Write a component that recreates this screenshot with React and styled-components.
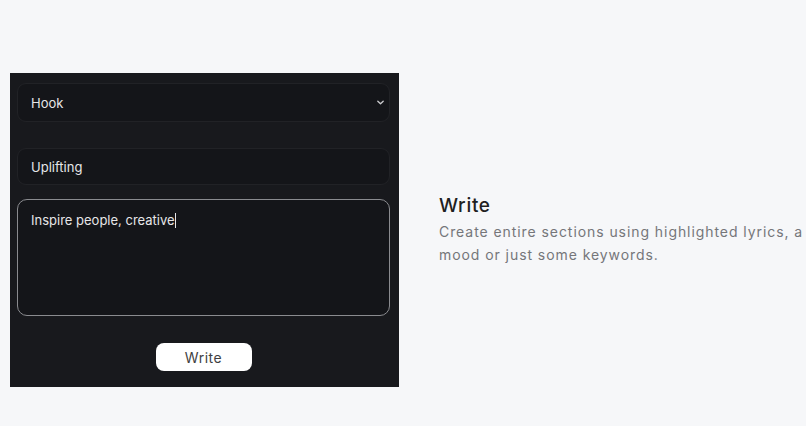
import styled, { createGlobalStyle } from 'styled-components';

const Global = createGlobalStyle`
html, body {
  margin: 0;
  background: #f6f7f9;
}
body {
  font-family: "Inter", "Liberation Sans", sans-serif;
}
`;

const Page = styled.div`
width: 806px;
height: 426px;
display: flex;
align-items: flex-start;
padding: 73px 0 0 10px;
box-sizing: border-box;
overflow: hidden;
`;

const Panel = styled.div`
flex-shrink: 0;
width: 389px;
height: 314px;
background: #18191d;
box-sizing: border-box;
padding: 10px 9px 0 7px;
display: flex;
flex-direction: column;
`;

const Field = styled.div`
height: ${p => p.h}px;
margin-bottom: ${p => p.mb}px;
background: #141519;
border: 1px solid #212226;
border-radius: 9px;
box-sizing: border-box;
display: flex;
align-items: center;
justify-content: space-between;
padding: 0 4px 0 13px;
color: #e6e6e8;
font-size: 13px;
`;

const Chevron = styled.svg`
width: 9px;
height: 9px;
`;

const TextBox = styled.div`
height: 117px;
border: 1.5px solid #8a8b8f;
border-radius: 10px;
box-sizing: border-box;
padding: 12px 13px;
color: #e6e6e8;
font-size: 13px;
background: #141519;
`;

const Caret = styled.span`
display: inline-block;
width: 1px;
height: 15px;
background: #e6e6e8;
vertical-align: -3px;
`;

const ButtonRow = styled.div`
display: flex;
justify-content: center;
margin-top: 27px;
`;

const WriteButton = styled.button`
width: 96px;
height: 28px;
background: #ffffff;
border: none;
border-radius: 8px;
color: #3f3f42;
font-family: "Inter", "Liberation Sans", sans-serif;
font-size: 14px;
font-weight: 400;
letter-spacing: 0.5px;
padding: 0;
`;

const Info = styled.div`
flex-shrink: 0;
margin-left: 40px;
margin-top: 121px;
`;

const Title = styled.h2`
margin: 0 0 3px;
font-size: 19px;
font-weight: 500;
color: #1f1f21;
letter-spacing: 0.7px;
`;

const Desc = styled.p`
margin: 0;
width: 366px;
font-size: 14px;
line-height: 23px;
color: #75767a;
letter-spacing: 0.93px;
`;

export default function App() {
  return (
    <>
      <Global />
      <Page>
        <Panel>
          <Field h={39} mb={26}>
            Hook
            <Chevron viewBox="0 0 10 10" fill="none" stroke="#c8c8cc" strokeWidth="1.5" strokeLinecap="round" strokeLinejoin="round">
              <path d="M2 3.5 L5 6.5 L8 3.5" />
            </Chevron>
          </Field>
          <Field h={37} mb={14}>Uplifting</Field>
          <TextBox>
            Inspire people, creative<Caret />
          </TextBox>
          <ButtonRow>
            <WriteButton>Write</WriteButton>
          </ButtonRow>
        </Panel>
        <Info>
          <Title>Write</Title>
          <Desc>Create entire sections using highlighted lyrics, a mood or just some keywords.</Desc>
        </Info>
      </Page>
    </>
  );
}
